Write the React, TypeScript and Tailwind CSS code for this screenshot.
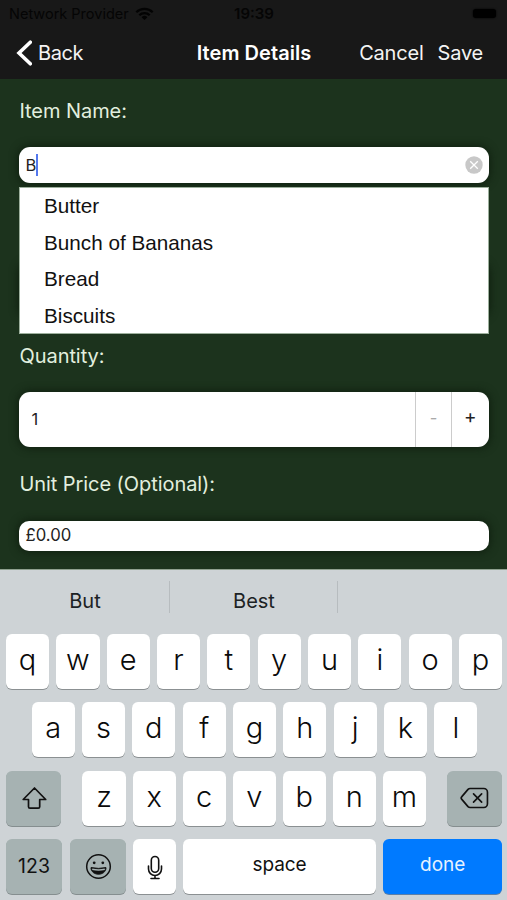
import { ReactNode } from "react"

const suggestions = ["Butter", "Bunch of Bananas", "Bread", "Biscuits"]
const topRow = ["q", "w", "e", "r", "t", "y", "u", "i", "o", "p"]
const homeRow = ["a", "s", "d", "f", "g", "h", "j", "k", "l"]
const bottomRow = ["z", "x", "c", "v", "b", "n", "m"]

function StatusBar() {
    return (
        <div className="flex h-[27px] items-center pl-[9px] pr-[11px] text-[14.5px] text-[#050505]">
            <div className="flex flex-1 items-center gap-[6px]">
                <span className="whitespace-nowrap">Network Provider</span>
                <svg width="19" height="14" viewBox="0 0 19 14" fill="none">
                    <path
                        d="M1.3 5.2a11.6 11.6 0 0 1 16.4 0M4.3 8.2a7.4 7.4 0 0 1 10.4 0"
                        stroke="#030303"
                        strokeWidth="2.3"
                    />
                    <path
                        d="M6.6 10.2a4.2 4.2 0 0 1 5.8 0L9.5 13z"
                        fill="#030303"
                    />
                </svg>
            </div>
            <span className="pl-[3px] pt-[2px] text-[15px] font-semibold">
                19:39
            </span>
            <div className="flex flex-1 justify-end">
                <div className="h-[9px] w-[23px] rounded-[3px] bg-black shadow-[0_0_2px_#000]" />
            </div>
        </div>
    )
}

function NavBar() {
    return (
        <div className="flex h-[52px] items-center pl-[16px] pr-[24px] text-[20px] text-[#f4f4f4]">
            <div className="flex flex-1 items-center gap-[6px]">
                <svg width="16" height="26" viewBox="0 0 16 26" fill="none">
                    <path
                        d="M14.3 2.2 3 13l11.3 10.8"
                        stroke="#fff"
                        strokeWidth="3.6"
                        strokeLinecap="round"
                        strokeLinejoin="miter"
                    />
                </svg>
                <span className="tracking-[-0.4px]">Back</span>
            </div>
            <h1 className="pl-[9px] font-semibold tracking-[0.05px] text-white">
                Item Details
            </h1>
            <div className="flex flex-1 justify-end gap-[14px] tracking-[-0.2px]">
                <span>Cancel</span>
                <span>Save</span>
            </div>
        </div>
    )
}

function Label({ children }: { children: ReactNode }) {
    return (
        <label className="block h-[26px] whitespace-nowrap pl-[0.5px] text-[20px] leading-[26px] tracking-[-0.07px] text-[#e2efdf]">
            {children}
        </label>
    )
}

function SuggestionList() {
    return (
        <ul className="absolute left-0 top-[40px] z-10 h-[147px] w-full border border-[#9db09d] bg-white text-[20.7px] text-[#111]">
            {suggestions.map((item) => (
                <li
                    key={item}
                    className="h-[36.6px] pl-[24px] leading-[35px]"
                >
                    <span className="font-['Liberation_Sans',sans-serif]">
                        {item}
                    </span>
                </li>
            ))}
        </ul>
    )
}

function Key({ children }: { children: ReactNode }) {
    return (
        <div className="flex h-[55px] w-[43.2px] items-center justify-center rounded-[6px] bg-white pb-[4px] text-[29px] font-[350] text-[#0a0a0a] shadow-[0_1px_0_#8b9092]">
            {children}
        </div>
    )
}

function Keyboard() {
    return (
        <div className="h-[331px] border-t border-[#8fa08f] bg-[#ced3d6] text-[#111]">
            <div className="flex h-[64px] pt-[11px] text-[20px] text-[#1c2224]">
                <div className="flex h-[32px] w-[170px] items-center justify-center border-r border-[#b7bcbf] pl-[1px] pt-[7px]">
                    But
                </div>
                <div className="flex h-[32px] w-[168px] items-center justify-center border-r border-[#b7bcbf] pl-[1px] pt-[7px]">
                    Best
                </div>
            </div>
            <div className="flex flex-col gap-[13.4px]">
                <div className="flex justify-between pl-[6px] pr-[5px]">
                    {topRow.map((k) => (
                        <Key key={k}>{k}</Key>
                    ))}
                </div>
                <div className="flex justify-between pl-[31.5px] pr-[29.5px]">
                    {homeRow.map((k) => (
                        <Key key={k}>{k}</Key>
                    ))}
                </div>
                <div className="flex justify-between pl-[6px] pr-[5px]">
                    <div className="flex h-[55px] w-[55px] items-center justify-center rounded-[6px] bg-[#a6b2b2] shadow-[0_1px_0_#858e8f]">
                        <svg
                            width="26"
                            height="24"
                            viewBox="0 0 26 24"
                            fill="none"
                            stroke="#111"
                            strokeWidth="1.7"
                            strokeLinejoin="round"
                        >
                            <path d="M13.5 2 2.2 13.5h5.3v7.2a1.5 1.5 0 0 0 1.5 1.5h8.2a1.5 1.5 0 0 0 1.5-1.5v-7.2h6z" />
                        </svg>
                    </div>
                    <div className="flex gap-[6.9px] pl-[0.5px]">
                        {bottomRow.map((k) => (
                            <Key key={k}>{k}</Key>
                        ))}
                    </div>
                    <div className="flex h-[55px] w-[55px] items-center justify-center rounded-[6px] bg-[#a6b2b2] shadow-[0_1px_0_#858e8f]">
                        <svg
                            width="29"
                            height="22"
                            viewBox="0 0 30 22"
                            fill="none"
                            stroke="#111"
                            strokeWidth="1.7"
                            strokeLinejoin="round"
                            strokeLinecap="round"
                        >
                            <path d="M10.4 1.2h14.2a3.8 3.8 0 0 1 3.8 3.8v12a3.8 3.8 0 0 1-3.8 3.8H10.4a3 3 0 0 1-2.1-.9L1.9 12.4a2 2 0 0 1 0-2.8l6.4-7.5a3 3 0 0 1 2.1-.9z" />
                            <path d="m14 6.7 8.4 8.6m0-8.6L14 15.3" />
                        </svg>
                    </div>
                </div>
                <div className="flex pl-[6px] pr-[5px]">
                    <div className="flex h-[55px] w-[56px] items-center justify-center rounded-[6px] bg-[#a6b2b2] text-[19.5px] shadow-[0_1px_0_#858e8f]">
                        123
                    </div>
                    <div className="ml-[8px] flex h-[55px] w-[56px] items-center justify-center rounded-[6px] bg-[#a6b2b2] shadow-[0_1px_0_#858e8f]">
                        <svg
                            width="27"
                            height="27"
                            viewBox="0 0 27 27"
                            fill="none"
                            stroke="#111"
                            strokeWidth="1.5"
                        >
                            <circle cx="13.5" cy="13.5" r="11.8" />
                            <circle cx="9.2" cy="9.8" r="1.4" fill="#111" stroke="none" />
                            <circle cx="17.8" cy="9.8" r="1.4" fill="#111" stroke="none" />
                            <path
                                d="M6 14.6q7.5 1.6 15 0c0 8.8-15 8.8-15 0z"
                                fill="#111"
                                strokeWidth="1"
                            />
                            <path d="M7.2 16.3q6.3 1.3 12.6 0" stroke="#a6b2b2" strokeWidth="1.4" />
                        </svg>
                    </div>
                    <div className="ml-[7px] flex h-[55px] w-[43px] items-center justify-center rounded-[6px] bg-white pl-[1px] pt-[1px] shadow-[0_1px_0_#8b9092]">
                        <svg
                            width="16"
                            height="25"
                            viewBox="0 0 16 25"
                            fill="none"
                            stroke="#111"
                            strokeWidth="1.6"
                            strokeLinecap="round"
                        >
                            <rect x="4.3" y="1.5" width="7.4" height="15.8" rx="3.7" />
                            <path d="M1.5 11v3a6.5 6.5 0 0 0 13 0v-3M8 20.5v3M4 23.5h8" />
                        </svg>
                    </div>
                    <div className="ml-[7px] flex h-[55px] w-[193px] items-center justify-center rounded-[6px] bg-white pb-[2px] text-[19px] tracking-[-0.1px] shadow-[0_1px_0_#8b9092]">
                        space
                    </div>
                    <div className="ml-[7.4px] flex h-[55px] flex-1 items-center justify-center rounded-[6px] bg-[#007aff] pb-[2px] text-[19px] text-[#e6f2ff] shadow-[0_1px_0_#5b7fa8]">
                        done
                    </div>
                </div>
            </div>
        </div>
    )
}

export default function App() {
    return (
        <div className="flex h-[900px] w-[507px] flex-col overflow-hidden bg-[#1c331d] font-['Inter',sans-serif]">
            <header className="h-[79px] bg-[#181818]">
                <StatusBar />
                <NavBar />
            </header>
            <main className="h-[490px] pl-[19px] pr-[18.5px] pt-[19px]">
                <Label>Item Name:</Label>
                <div className="relative mt-[23px] flex h-[36px] items-center justify-between rounded-[11px] bg-white pl-[6.5px] pr-[6px] shadow-[0_0_8px_1px_#0f1f0f]">
                    <div className="flex items-center text-[16.5px] text-[#222]">
                        B
                        <span className="h-[22px] w-[2px] bg-[#5478ee]" />
                    </div>
                    <svg width="18" height="18" viewBox="0 0 18 18">
                        <circle cx="9" cy="9" r="8.7" fill="#c8c8c8" />
                        <path
                            d="m5.2 5.2 7.6 7.6m0-7.6-7.6 7.6"
                            stroke="#fff"
                            strokeWidth="1.3"
                        />
                    </svg>
                    <SuggestionList />
                </div>
                <div className="mt-[80px] h-[54px] rounded-[11px] bg-white shadow-[0_0_8px_1px_#0f1f0f]" />
                <div className="mt-[26px]">
                    <Label>Quantity:</Label>
                </div>
                <div className="mt-[23px] flex h-[55px] rounded-[11px] bg-white text-[16.5px] text-[#222] shadow-[0_0_8px_1px_#0f1f0f]">
                    <span className="flex flex-1 items-center pl-[12.5px]">
                        1
                    </span>
                    <button className="w-[36px] border-l border-[#ccc] pb-[3px] text-[#aaa]">
                        -
                    </button>
                    <button className="w-[37.5px] border-l border-[#ccc] pb-[4px] text-[19px]">
                        +
                    </button>
                </div>
                <div className="mt-[24px]">
                    <Label>Unit Price (Optional):</Label>
                </div>
                <div className="mt-[24px] flex h-[30px] items-center rounded-[10px] bg-white pl-[6.5px] text-[16.7px] text-[#222] shadow-[0_0_8px_1px_#0f1f0f]">
                    £0.00
                </div>
            </main>
            <Keyboard />
        </div>
    )
}
